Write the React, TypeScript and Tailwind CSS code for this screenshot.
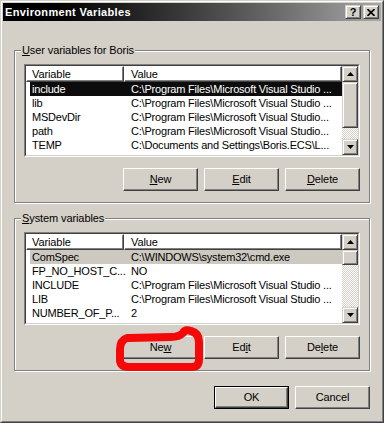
import type { ReactNode } from "react";

type Row = [string, string];

const userRows: Row[] = [
  ["include", "C:\\Program Files\\Microsoft Visual Studio ..."],
  ["lib", "C:\\Program Files\\Microsoft Visual Studio ..."],
  ["MSDevDir", "C:\\Program Files\\Microsoft Visual Studio..."],
  ["path", "C:\\Program Files\\Microsoft Visual Studio..."],
  ["TEMP", "C:\\Documents and Settings\\Boris.ECS\\L..."],
];

const systemRows: Row[] = [
  ["ComSpec", "C:\\WINDOWS\\system32\\cmd.exe"],
  ["FP_NO_HOST_C...", "NO"],
  ["INCLUDE", "C:\\Program Files\\Microsoft Visual Studio ..."],
  ["LIB", "C:\\Program Files\\Microsoft Visual Studio ..."],
  ["NUMBER_OF_P...", "2"],
];

const raised =
  "border border-t-[#d4d0c8] border-l-[#d4d0c8] border-r-[#404040] border-b-[#404040] bg-[#d4d0c8] shadow-[inset_1px_1px_0_#fff,inset_-1px_-1px_0_#808080]";

function Arrow({ up }: { up?: boolean }) {
  return (
    <svg width="7" height="4" viewBox="0 0 7 4">
      <path d={up ? "M3.5 0 L7 4 L0 4 Z" : "M0 0 L7 0 L3.5 4 Z"} fill="black" />
    </svg>
  );
}

function Button({ children, isDefault }: { children: ReactNode; isDefault?: boolean }) {
  const face = (
    <div className="flex h-full w-full items-center justify-center border border-t-white border-l-white border-r-[#404040] border-b-[#404040] bg-[#d4d0c8] shadow-[inset_-1px_-1px_0_#808080]">
      {children}
    </div>
  );
  if (isDefault) {
    return <div className="h-[23px] w-[75px] border border-black">{face}</div>;
  }
  return <div className="h-[23px] w-[75px]">{face}</div>;
}

function HeaderCell({ children, className }: { children: ReactNode; className: string }) {
  return (
    <div
      className={
        "flex h-full items-center border-t border-l border-t-white border-l-white border-b border-r border-b-[#404040] border-r-[#404040] shadow-[inset_-1px_-1px_0_#808080] " +
        className
      }
    >
      {children}
    </div>
  );
}

function ScrollBar({ thumb }: { thumb: number }) {
  return (
    <div className="flex w-[16px] shrink-0 flex-col">
      <div className={"flex h-[16px] shrink-0 items-center justify-center " + raised}>
        <Arrow up />
      </div>
      <div className={"shrink-0 " + raised} style={{ height: thumb }} />
      <div className="flex-1 bg-[image:repeating-conic-gradient(#fff_0%_25%,#d4d0c8_0%_50%)] bg-[length:2px_2px]" />
      <div className={"flex h-[16px] shrink-0 items-center justify-center " + raised}>
        <Arrow />
      </div>
    </div>
  );
}

function ListView({ rows, selBg, selText, thumb }: { rows: Row[]; selBg: string; selText: string; thumb: number }) {
  return (
    <div className="flex h-[93px] w-[336px] border border-t-[#808080] border-l-[#808080] border-r-white border-b-white">
      <div className="flex flex-1 overflow-hidden border border-t-[#404040] border-l-[#404040] border-r-[#d4d0c8] border-b-[#d4d0c8] bg-white">
        <div className="flex min-w-0 flex-1 flex-col overflow-hidden">
          <div className="flex h-[16px] shrink-0">
            <HeaderCell className="w-[98px] pl-[5px]">Variable</HeaderCell>
            <HeaderCell className="flex-1 pl-[6px]">Value</HeaderCell>
          </div>
          {rows.map(([name, value], i) => (
            <div key={name} className="flex h-[14px] shrink-0 pl-[4px] leading-[14px] tracking-[-0.2px]">
              <div className={"flex flex-1 " + (i === 0 ? selBg + " " + selText : "")}>
                <span className="w-[94px] shrink-0 whitespace-nowrap pl-[2px]">{name}</span>
                <span className="overflow-hidden whitespace-nowrap pl-[7px]">{value}</span>
              </div>
            </div>
          ))}
        </div>
        <ScrollBar thumb={thumb} />
      </div>
    </div>
  );
}

function Group({ label, children }: { label: ReactNode; children: ReactNode }) {
  return (
    <div className="relative flex h-[153px] flex-col border border-[#808080] px-[9px] pt-[13px] shadow-[inset_1px_1px_0_#fff,1px_1px_0_#fff]">
      <div className="absolute -top-[7px] left-[6px] bg-[#d4d0c8] px-[1px] leading-[13px]">{label}</div>
      {children}
    </div>
  );
}

export default function App() {
  return (
    <div className="relative h-[423px] w-[384px] border border-t-[#d4d0c8] border-l-[#d4d0c8] border-r-[#404040] border-b-[#404040] bg-[#d4d0c8] font-['Liberation_Sans',Arial,sans-serif] text-[11px] tracking-[-0.1px] text-black">
      <div className="flex h-full flex-col border border-t-white border-l-white border-r-[#808080] border-b-[#808080] p-[1px]">
        <div className="flex h-[18px] shrink-0 items-center justify-between bg-linear-to-r from-black to-[#a8a8a8] pl-[2px] pr-[2px]">
          <span className="text-[11px] font-bold tracking-[0.35px] text-white">Environment Variables</span>
          <div className="flex gap-[2px]">
            <div className={"flex h-[14px] w-[16px] items-center justify-center text-[11px] font-bold leading-none " + raised}>
              ?
            </div>
            <div className={"flex h-[14px] w-[16px] items-center justify-center " + raised}>
              <svg width="8" height="7" viewBox="0 0 8 7">
                <path d="M0.5 0 L7.5 7 M7.5 0 L0.5 7" stroke="black" strokeWidth="1.6" />
              </svg>
            </div>
          </div>
        </div>

        <div className="flex flex-col px-[11px] pt-[29px]">
          <Group
            label={
              <>
                <span className="underline">U</span>ser variables for Boris
              </>
            }
          >
            <ListView rows={userRows} selBg="bg-[#0c0c0c]" selText="text-white" thumb={46} />
            <div className="mt-[11px] flex justify-end gap-[6px]">
              <Button>
                <span className="underline">N</span>ew
              </Button>
              <Button>
                <span className="underline">E</span>dit
              </Button>
              <Button>
                <span className="underline">D</span>elete
              </Button>
            </div>
          </Group>

          <div className="mt-[15px]">
            <Group
              label={
                <>
                  <span className="underline">S</span>ystem variables
                </>
              }
            >
              <ListView rows={systemRows} selBg="bg-[#cdc9c1]" selText="" thumb={15} />
              <div className="mt-[11px] flex justify-end gap-[6px]">
                <Button>
                  Ne<span className="underline">w</span>
                </Button>
                <Button>
                  Ed<span className="underline">i</span>t
                </Button>
                <Button>
                  De<span className="underline">l</span>ete
                </Button>
              </div>
            </Group>
          </div>

          <div className="mt-[15px] flex justify-end gap-[6px]">
            <Button isDefault>OK</Button>
            <Button>Cancel</Button>
          </div>
        </div>
      </div>

      <svg className="pointer-events-none absolute left-0 top-0" width="384" height="423" viewBox="0 0 384 423">
        <path
          d="M126 337 Q119 339 119 349 L119 360 Q120 366 128 366 L191 366 Q198 366 198 358 L198 341 Q198 332 190 330 Q184 328 182 332 Q178 336 170 336 L128 337"
          fill="none"
          stroke="#f40808"
          strokeWidth="8"
          strokeLinecap="round"
          strokeLinejoin="round"
        />
      </svg>
    </div>
  );
}
